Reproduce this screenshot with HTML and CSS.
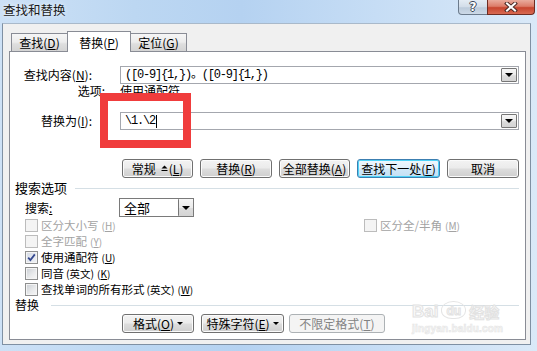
FILE: index.html
```html
<!DOCTYPE html>
<html lang="zh">
<head>
<meta charset="utf-8">
<title>查找和替换</title>
<link rel="stylesheet" href="styles.css">
</head>
<body>
<div class="window">
  <div class="titlebar">
    <span class="title">查找和替换</span>
    <div class="caption-btns">
      <span class="cbtn help">?</span>
      <span class="cbtn close">
        <svg width="14" height="10" viewBox="0 0 14 10">
          <path d="M3 1.5 L11 8.5 M11 1.5 L3 8.5" stroke="#4a2a26" stroke-width="4" stroke-linecap="square"/>
          <path d="M3 1.5 L11 8.5 M11 1.5 L3 8.5" stroke="#ffffff" stroke-width="2" stroke-linecap="square"/>
        </svg>
      </span>
    </div>
  </div>
  <div class="client">
    <div class="tabs">
      <div class="tab">查找(<u>D</u>)</div>
      <div class="tab active">替换(<u>P</u>)</div>
      <div class="tab">定位(<u>G</u>)</div>
    </div>
    <div class="panel">
      <div class="field-row find-row">
        <span class="field-label">查找内容(<u>N</u>):</span>
        <div class="combo">
          <span class="combo-text mono">([0-9]{1,})。([0-9]{1,})</span>
          <span class="drop"><span class="tri"></span></span>
        </div>
      </div>
      <div class="opts-row">
        <span class="opts-label">选项:</span>
        <span class="opts-value">使用通配符</span>
      </div>
      <div class="field-row replace-row">
        <span class="field-label">替换为(<u>I</u>):</span>
        <div class="combo">
          <span class="combo-text mono">\1.\2<span class="caret"></span></span>
          <span class="drop"><span class="tri"></span></span>
        </div>
      </div>
      <div class="btn-row">
        <button class="btn w-normal">常规 <svg class="more" width="7" height="7" viewBox="0 0 7 7"><path d="M3.5 0.5 L6.5 3.5 L0.5 3.5 Z" fill="#000"/><rect x="0.5" y="5" width="6" height="1" fill="#000"/></svg> (<u>L</u>)</button>
        <button class="btn w-replace">替换(<u>R</u>)</button>
        <button class="btn w-all">全部替换(<u>A</u>)</button>
        <button class="btn btn-focus w-next">查找下一处(<u>F</u>)</button>
        <button class="btn w-cancel">取消</button>
      </div>
      <div class="section search-head">
        <span class="section-title">搜索选项</span>
        <span class="section-line"></span>
      </div>
      <div class="search-row">
        <span class="search-label">搜索<u>:</u></span>
        <div class="select">
          <span class="select-text">全部</span>
          <span class="drop"><span class="tri"></span></span>
        </div>
      </div>
      <div class="checks">
        <div class="cb-row split">
          <div class="cb-item disabled"><span class="box"></span><span class="cb-text">区分大小写<span class="mn">(<u>H</u>)</span></span></div>
          <div class="cb-item disabled"><span class="box"></span><span class="cb-text">区分全/半角<span class="mn">(<u>M</u>)</span></span></div>
        </div>
        <div class="cb-row">
          <div class="cb-item disabled"><span class="box"></span><span class="cb-text">全字匹配<span class="mn">(<u>Y</u>)</span></span></div>
        </div>
        <div class="cb-row">
          <div class="cb-item"><span class="box checked"><svg width="9" height="9" viewBox="0 0 9 9"><path d="M1.2 4.6 L3.4 7 L7.8 1.4" fill="none" stroke="#34488f" stroke-width="1.8"/></svg></span><span class="cb-text">使用通配符<span class="mn">(<u>U</u>)</span></span></div>
        </div>
        <div class="cb-row">
          <div class="cb-item"><span class="box"></span><span class="cb-text">同音<span class="mn2">(英文)</span><span class="mn">(<u>K</u>)</span></span></div>
        </div>
        <div class="cb-row">
          <div class="cb-item"><span class="box"></span><span class="cb-text">查找单词的所有形式<span class="mn2">(英文)</span><span class="mn">(<u>W</u>)</span></span></div>
        </div>
      </div>
      <div class="section replace-head">
        <span class="section-title small">替换</span>
        <span class="section-line"></span>
      </div>
      <div class="btn-row bottom-row">
        <button class="btn w-format">格式(<u>O</u>) <span class="tri small"></span></button>
        <button class="btn w-special">特殊字符(<u>E</u>) <span class="tri small"></span></button>
        <button class="btn btn-disabled w-noformat">不限定格式(<u>T</u>)</button>
      </div>

      <div class="redbox"></div>
      <div class="watermark">
        <div class="wm-logo"><span class="wm-bai">Bai</span><span class="wm-du">du</span><span class="wm-cn">经验</span></div>
        <div class="wm-url">jingyan.baidu.com</div>
      </div>
    </div>
  </div>
</div>
</body>
</html>
```

FILE: styles.css
```css
html, body {
  margin: 0;
  padding: 0;
}
body {
  font-family: "Noto Sans CJK SC", "Noto Sans", sans-serif;
  font-size: 12px;
  color: #000;
  background: #fff;
}
u { text-decoration: underline; text-underline-offset: 1px; }

.window {
  width: 537px;
  height: 351px;
  overflow: hidden;
  background: linear-gradient(90deg, #cde1f6 0%, #bcd7f2 25%, #b5d2f1 45%, #c6ddf5 70%, #dae9f8 100%);
}

/* title bar */
.titlebar {
  height: 23px;
  display: flex;
  justify-content: space-between;
  align-items: flex-start;
}
.title {
  padding-left: 3px;
  line-height: 20px;
  font-size: 12.5px;
  color: #1a1a1a;
  text-shadow: 0 0 4px rgba(255,255,255,0.9);
}
.caption-btns {
  display: flex;
  margin-right: 2px;
}
.cbtn {
  height: 15px;
  box-sizing: border-box;
  display: flex;
  align-items: center;
  justify-content: center;
  border: 1px solid #6c7b8c;
  border-top: none;
}
.help {
  width: 30px;
  border-radius: 0 0 0 4px;
  background: linear-gradient(#e4ecf4 0%, #d2dde9 50%, #bccbdb 55%, #ccd9e7 100%);
  color: #fff;
  font-family: "DejaVu Sans", sans-serif;
  font-weight: bold;
  font-size: 12px;
  line-height: 13px;
  text-shadow: 1px 0 0 #3b4656, -1px 0 0 #3b4656, 0 1px 0 #3b4656, 0 -1px 0 #3b4656;
}
.close {
  width: 48px;
  margin-left: -1px;
  border-color: #6e2c22;
  border-radius: 0 0 4px 0;
  background: linear-gradient(#e9ab9d 0%, #dc7c69 45%, #c7452f 55%, #d86a52 100%);
}

/* client area */
.client {
  margin-left: 2px;
  width: 529px;
  height: 322px;
  box-sizing: border-box;
  border: 1px solid #7f90a3;
  border-top-color: #a9b9ca;
  background: #f0f0f0;
  padding: 7px 0 0 6px;
}

.tabs {
  display: flex;
  align-items: flex-end;
  height: 21px;
  margin-left: 2px;
  margin-bottom: -1px;
}
.tab {
  width: 57px;
  height: 19px;
  box-sizing: border-box;
  border: 1px solid #898c95;
  border-bottom: none;
  background: linear-gradient(#f6f6f6 0%, #ececec 45%, #dedede 55%, #d2d2d2 100%);
  text-align: center;
  line-height: 17px;
  font-size: 12px;
}
.tab + .tab { margin-left: -1px; }
.tab.active {
  width: 64px;
  height: 21px;
  padding-top: 2px;
  background: #fff;
  position: relative;
  z-index: 1;
}

.panel {
  position: relative;
  width: 517px;
  height: 289px;
  box-sizing: border-box;
  border: 1px solid #898c95;
  background: #fff;
}

/* fields */
.field-row {
  display: flex;
  align-items: center;
  height: 18px;
}
.find-row { margin-top: 14px; }
.replace-row { margin-top: 15px; }
.field-label {
  width: 82px;
  text-align: right;
  font-size: 12px;
  line-height: 12px;
}
.combo {
  margin-left: 28px;
  width: 399px;
  height: 18px;
  box-sizing: border-box;
  border: 1px solid #a4a7ae;
  background: #fff;
  display: flex;
  align-items: center;
  justify-content: space-between;
}
.combo-text {
  padding-left: 4px;
  display: flex;
  align-items: center;
}
.mono {
  font-family: "Liberation Mono", "Noto Sans CJK SC", monospace;
  font-size: 12px;
  letter-spacing: -1.2px;
  line-height: 14px;
}
.caret {
  display: inline-block;
  width: 1px;
  height: 13px;
  background: #000;
  margin-left: 1px;
}
.drop {
  width: 16px;
  height: 14px;
  box-sizing: border-box;
  margin-right: 1px;
  border: 1px solid #767676;
  border-radius: 1px;
  background: linear-gradient(#f6f6f6 0%, #ebebeb 50%, #dcdcdc 55%, #d4d4d4 100%);
  display: flex;
  align-items: center;
  justify-content: center;
}
.tri {
  width: 0;
  height: 0;
  border-left: 4px solid transparent;
  border-right: 4px solid transparent;
  border-top: 4px solid #000;
}
.tri.small {
  display: inline-block;
  border-left-width: 3px;
  border-right-width: 3px;
  border-top-width: 3px;
  vertical-align: middle;
  margin-left: 3px;
}

.opts-row {
  display: flex;
  margin-top: 1px;
  height: 12px;
  line-height: 12px;
  font-size: 12px;
}
.opts-label {
  width: 95px;
  text-align: right;
}
.opts-value {
  margin-left: 15px;
}

/* buttons */
.btn-row {
  display: flex;
  margin-top: 29px;
  padding-left: 112px;
  gap: 7px;
  height: 19px;
}
.btn {
  height: 19px;
  box-sizing: border-box;
  padding: 0;
  margin: 0;
  border: 1px solid #707070;
  border-radius: 3px;
  background: linear-gradient(#f3f3f3 0%, #ebebeb 48%, #dddddd 52%, #cfcfcf 100%);
  box-shadow: inset 0 0 0 1px #fbfbfb;
  font-family: "Noto Sans CJK SC", sans-serif;
  font-size: 12px;
  line-height: 16px;
  color: #000;
  text-align: center;
  white-space: nowrap;
  display: flex;
  align-items: center;
  justify-content: center;
}
.btn-focus {
  border-color: #3c7fb1;
  box-shadow: inset 0 0 0 1px #4ed3f7;
  background: linear-gradient(#eef7fd 0%, #e2f1fb 48%, #d0e8f8 52%, #c4e0f4 100%);
}
.btn-disabled {
  border-color: #adb2b5;
  background: #f4f4f4;
  box-shadow: none;
  color: #838383;
}
.w-normal { width: 71px; }
.w-replace { width: 72px; }
.w-all { width: 71px; }
.w-next { width: 83px; }
.w-cancel { width: 72px; }
.more { margin: 0 1px 0 5px; }

/* sections */
.section {
  display: flex;
  align-items: center;
  height: 14px;
  padding-left: 5px;
}
.search-head { margin-top: 3px; }
.replace-head { margin-top: 1px; }
.section-title {
  font-size: 13px;
  line-height: 14px;
}
.section-title.small { font-size: 12px; }
.section-line {
  flex: 1;
  height: 1px;
  background: #d5dfe5;
  margin-left: 8px;
  margin-right: 6px;
}
.replace-head .section-line { margin-left: 12px; }

.search-row {
  display: flex;
  align-items: center;
  margin-top: 3px;
  height: 19px;
  padding-left: 15px;
}
.search-label {
  width: 94px;
  font-size: 12px;
}
.select {
  width: 75px;
  height: 19px;
  box-sizing: border-box;
  border: 1px solid #7a7a7a;
  background: #fff;
  display: flex;
  align-items: center;
  justify-content: space-between;
}
.select-text {
  padding-left: 4px;
  font-size: 13px;
}
.select .drop {
  width: 15px;
  height: 17px;
  margin-right: 0;
  border-width: 0 0 0 1px;
}

/* checkboxes */
.cb-row {
  height: 16px;
  display: flex;
  align-items: center;
  padding-left: 15px;
}
.cb-row.split {
  display: grid;
  grid-template-columns: 339px auto;
  align-items: center;
}
.cb-item {
  display: flex;
  align-items: center;
}
.box {
  width: 13px;
  height: 13px;
  box-sizing: border-box;
  border: 1px solid #8e8f8f;
  background: linear-gradient(135deg, #c9cdd3 0%, #eaebec 60%, #f7f7f7 100%);
  box-shadow: inset 0 0 0 1px #f4f4f4;
  margin-right: 3px;
  display: flex;
  align-items: center;
  justify-content: center;
}
.box.checked {
  background: linear-gradient(135deg, #d5dbe6 0%, #f0f2f6 100%);
}
.disabled .box {
  border-color: #bcbcbc;
  background: #f4f4f4;
  box-shadow: none;
}
.cb-text {
  font-size: 11.5px;
  line-height: 14px;
}
.disabled .cb-text { color: #a3a3a3; }
.mn {
  font-size: 10px;
  margin-left: 3px;
}
.mn2 {
  font-size: 10.5px;
  margin-left: 2px;
}

.bottom-row {
  margin-top: 2px;
}
.w-format { width: 72px; }
.w-special { width: 83px; }
.w-noformat { width: 96px; margin-left: -2px; }

/* overlays */
.redbox {
  position: absolute;
  left: 90px;
  top: 41px;
  width: 91px;
  height: 55px;
  box-sizing: border-box;
  border: 8px solid #f03c3c;
}
.watermark {
  position: absolute;
  left: 402px;
  top: 241px;
  width: 96px;
  color: #fff;
  font-family: "Liberation Sans", sans-serif;
  font-weight: bold;
}
.wm-logo {
  display: flex;
  align-items: flex-end;
  height: 26px;
}
.wm-bai, .wm-du, .wm-cn {
  color: #fbfbfb;
  -webkit-text-stroke: 1px #e2e2e2;
  font-size: 17px;
  line-height: 14px;
}
.wm-du {
  font-size: 12px;
  margin: 0 3px;
  padding: 4px 4px 2px;
  border: 1px solid #e4e4e4;
  border-radius: 50% 50% 45% 45%;
  line-height: 10px;
}
.wm-cn {
  font-family: "Noto Sans CJK SC", sans-serif;
  font-size: 15px;
}
.wm-url {
  margin-top: 5px;
  font-size: 10px;
  line-height: 10px;
  color: #f6f6f6;
  -webkit-text-stroke: 0.6px #e6e6e6;
  letter-spacing: 0.2px;
}
```
